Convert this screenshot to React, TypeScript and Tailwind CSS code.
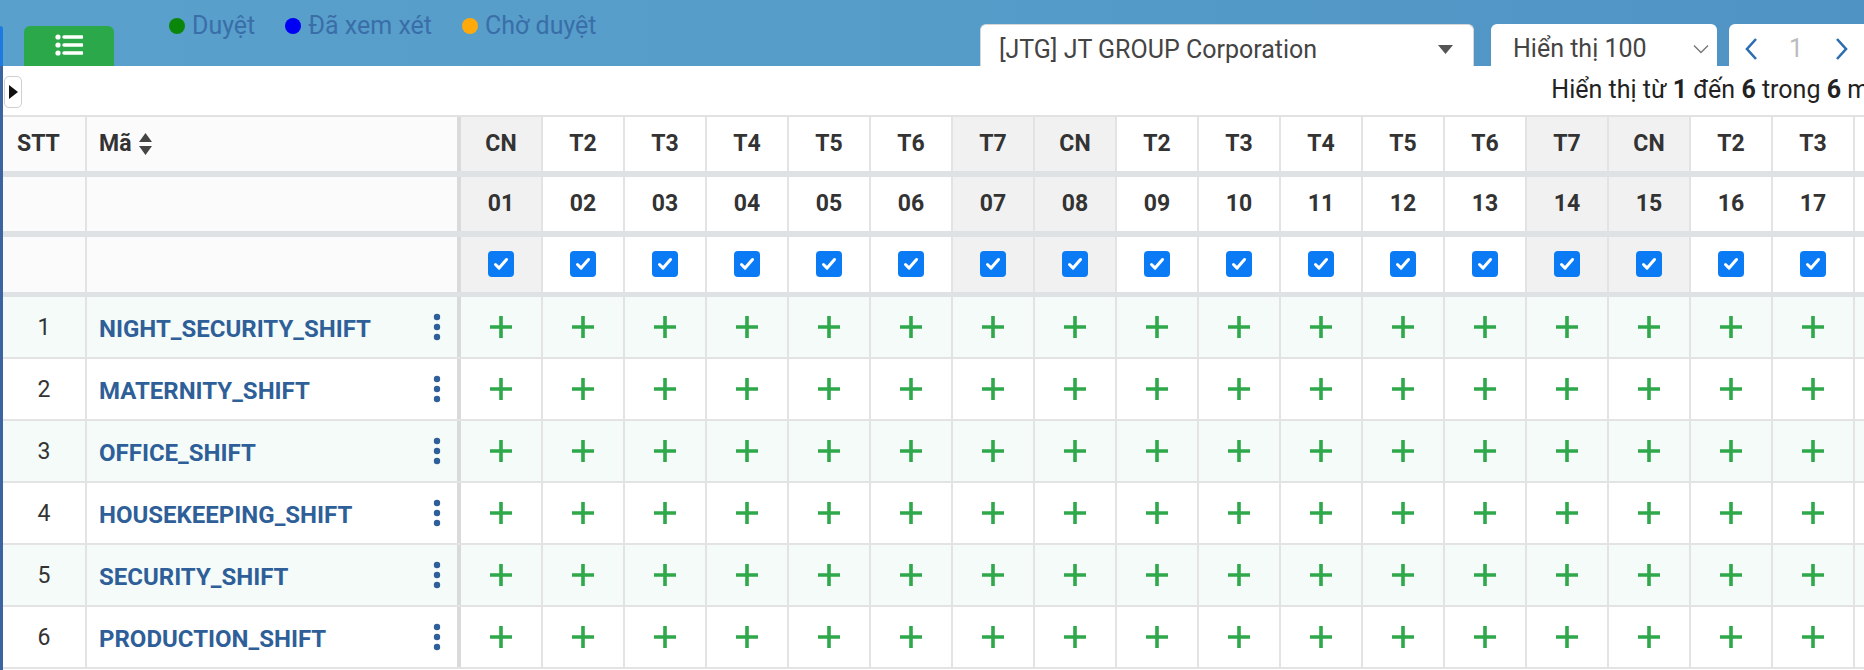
import React from 'react';

const DAY_NAMES = ['CN', 'T2', 'T3', 'T4', 'T5', 'T6', 'T7'];

const days = Array.from({ length: 19 }, (_, i) => ({
  label: DAY_NAMES[i % 7],
  num: String(i + 1).padStart(2, '0'),
  weekend: i % 7 === 0 || i % 7 === 6,
}));

const shifts = [
  'NIGHT_SECURITY_SHIFT',
  'MATERNITY_SHIFT',
  'OFFICE_SHIFT',
  'HOUSEKEEPING_SHIFT',
  'SECURITY_SHIFT',
  'PRODUCTION_SHIFT',
];

const Plus = () => (
  <svg width="24" height="24" viewBox="0 0 24 24">
    <path d="M12 1v22M1 12h22" stroke="#2ea84a" strokeWidth="3.6" fill="none" />
  </svg>
);

const CheckBox = () => (
  <div className="w-[26px] h-[26px] rounded-[4px] bg-[#0b7af5] flex items-center justify-center">
    <svg width="18" height="18" viewBox="0 0 18 18">
      <path d="M3.5 9.5l3.6 3.6L14.5 4.5" stroke="#fff" strokeWidth="3" fill="none" strokeLinecap="round" strokeLinejoin="round" />
    </svg>
  </div>
);

const Kebab = () => (
  <svg width="8" height="28" viewBox="0 0 8 28">
    <circle cx="4" cy="4" r="3.2" fill="#2f5f98" />
    <circle cx="4" cy="14" r="3.2" fill="#2f5f98" />
    <circle cx="4" cy="24" r="3.2" fill="#2f5f98" />
  </svg>
);

export default function App() {
  return (
    <div className="w-[1864px] h-[670px] overflow-hidden flex flex-col bg-gradient-to-r from-[#5aa0cc] via-[#559cc9] to-[#4f93c4] font-[Roboto,sans-serif] text-[#333]">
      {/* top bar */}
      <div className="h-[66px] flex shrink-0">
        <div className="w-[980px] shrink-0 flex items-start">
          <div className="w-[3px] h-[40px] mt-[26px] bg-[#1f7ae0] rounded-tr-[3px]" />
          <div className="ml-[21px] mt-[26px] w-[90px] h-[40px] rounded-t-[6px] bg-[#2aa84a] flex justify-center pt-[8px]">
            <svg width="28" height="22" viewBox="0 0 28 22">
              <circle cx="3" cy="3" r="2.6" fill="#fff" />
              <circle cx="3" cy="11" r="2.6" fill="#fff" />
              <circle cx="3" cy="19" r="2.6" fill="#fff" />
              <path d="M9 3h18M9 11h18M9 19h18" stroke="#fff" strokeWidth="3.4" strokeLinecap="round" />
            </svg>
          </div>
          <div className="ml-[55px] mt-[11px] flex items-center gap-[30px] text-[25px] leading-[30px] text-[#3a6ea8]">
            <div className="flex items-center gap-[7px]">
              <span className="w-[16px] h-[16px] rounded-full bg-[#0a870a]" />
              <span>Duyệt</span>
            </div>
            <div className="flex items-center gap-[7px]">
              <span className="w-[16px] h-[16px] rounded-full bg-[#0000f5]" />
              <span>Đã xem xét</span>
            </div>
            <div className="flex items-center gap-[7px]">
              <span className="w-[16px] h-[16px] rounded-full bg-[#ffa90a]" />
              <span>Chờ duyệt</span>
            </div>
          </div>
        </div>

        <div className="mt-[24px] w-[494px] h-[42px] shrink-0 bg-white rounded-t-[6px] border-t border-x border-[#d6d6d6] flex items-center pl-[18px] pr-[20px] pt-[8px]">
          <span className="flex-1 text-[25px] text-[#444] whitespace-nowrap">[JTG] JT GROUP Corporation</span>
          <svg width="15" height="9" viewBox="0 0 15 9">
            <path d="M0 0h15L7.5 9z" fill="#555" />
          </svg>
        </div>

        <div className="ml-[17px] mt-[24px] w-[226px] h-[42px] shrink-0 bg-white rounded-t-[6px] flex items-center pl-[22px] pr-[8px] pt-[8px]">
          <span className="flex-1 text-[25px] text-[#444] whitespace-nowrap">Hiển thị 100</span>
          <svg width="16" height="10" viewBox="0 0 16 10">
            <path d="M1 1.5l7 7 7-7" stroke="#777" strokeWidth="1.4" fill="none" />
          </svg>
        </div>

        <div className="ml-[12px] mt-[24px] w-[160px] h-[42px] shrink-0 bg-white rounded-t-[6px] flex items-center pl-[15px] pt-[8px]">
          <svg width="14" height="24" viewBox="0 0 14 24">
            <path d="M12 2L3 12l9 10" stroke="#2d6db0" strokeWidth="2.6" fill="none" />
          </svg>
          <span className="ml-[31px] text-[25px] text-[#bbb]">1</span>
          <svg className="ml-[32px]" width="14" height="24" viewBox="0 0 14 24">
            <path d="M2 2l9 10-9 10" stroke="#2d6db0" strokeWidth="2.6" fill="none" />
          </svg>
        </div>
      </div>

      {/* white panel */}
      <div className="flex-1 flex bg-white">
        <div className="w-[3px] shrink-0 bg-[#3c64a0]" />
        <div className="flex-1 flex flex-col min-w-0">
          <div className="h-[49px] flex items-start shrink-0">
            <button className="ml-[1px] mt-[10px] w-[18px] h-[32px] rounded-[5px] border border-[#cfcfcf] bg-white flex items-center justify-center">
              <svg width="9" height="14" viewBox="0 0 9 14">
                <path d="M0 0l9 7-9 7z" fill="#111" />
              </svg>
            </button>
            <div className="flex-1 flex justify-end mt-[9px] -mr-[32px] text-[25px] leading-[30px] text-[#222] whitespace-nowrap">
              <span>
                Hiển thị từ <b>1</b> đến <b>6</b> trong <b>6</b> mục
              </span>
            </div>
          </div>

          {/* table */}
          <div className="border-t-2 border-[#e2e2e2] flex flex-col">
            {/* header row: day names */}
            <div className="flex h-[60px] border-b-[6px] border-[#dfe2e4]">
              <div className="w-[84px] shrink-0 bg-[#fbfbfb] border-r-2 border-[#e3e3e3] flex items-center pl-[14px] text-[23px] font-bold">
                STT
              </div>
              <div className="w-[374px] shrink-0 bg-[#fbfbfb] border-r-4 border-[#dadada] flex items-center pl-[12px] gap-[7px] text-[23px] font-bold">
                Mã
                <svg width="15" height="24" viewBox="0 0 15 24">
                  <path d="M7.5 1l6.5 9H1zM7.5 23l6.5-9H1z" fill="#444" />
                </svg>
              </div>
              {days.map((d) => (
                <div
                  key={'n' + d.num}
                  className={`w-[82px] shrink-0 border-r-2 border-[#e3e3e3] flex items-center justify-center text-[23px] font-bold ${d.weekend ? 'bg-[#f1f1f1]' : 'bg-white'}`}
                >
                  {d.label}
                </div>
              ))}
            </div>

            {/* header row: dates */}
            <div className="flex h-[60px] border-b-[6px] border-[#dfe2e4]">
              <div className="w-[84px] shrink-0 bg-[#fbfbfb] border-r-2 border-[#e3e3e3]" />
              <div className="w-[374px] shrink-0 bg-[#fbfbfb] border-r-4 border-[#dadada]" />
              {days.map((d) => (
                <div
                  key={'d' + d.num}
                  className={`w-[82px] shrink-0 border-r-2 border-[#e3e3e3] flex items-center justify-center text-[23px] font-bold ${d.weekend ? 'bg-[#f1f1f1]' : 'bg-white'}`}
                >
                  {d.num}
                </div>
              ))}
            </div>

            {/* header row: checkboxes */}
            <div className="flex h-[60px] border-b-[5px] border-[#dfe2e4]">
              <div className="w-[84px] shrink-0 bg-[#fbfbfb] border-r-2 border-[#e3e3e3]" />
              <div className="w-[374px] shrink-0 bg-[#fbfbfb] border-r-4 border-[#dadada]" />
              {days.map((d) => (
                <div
                  key={'c' + d.num}
                  className={`w-[82px] shrink-0 border-r-2 border-[#e3e3e3] flex items-center justify-center pb-[2px] ${d.weekend ? 'bg-[#f1f1f1]' : 'bg-white'}`}
                >
                  <CheckBox />
                </div>
              ))}
            </div>

            {/* data rows */}
            {shifts.map((code, idx) => (
              <div
                key={code}
                className={`flex h-[62px] border-b-2 border-[#e3e3e3] ${idx % 2 === 0 ? 'bg-[#f4fbf8]' : 'bg-white'}`}
              >
                <div className="w-[84px] shrink-0 border-r-2 border-[#e3e3e3] flex items-center justify-center text-[23px] pt-[2px]">
                  {idx + 1}
                </div>
                <div className="w-[374px] shrink-0 border-r-4 border-[#dadada] flex items-center justify-between pl-[12px] pr-[16px]">
                  <span className="text-[24px] font-bold text-[#2f5f98] pt-[3px]">{code}</span>
                  <Kebab />
                </div>
                {days.map((d) => (
                  <div
                    key={code + d.num}
                    className="w-[82px] shrink-0 border-r-2 border-[#e3e3e3] flex items-center justify-center"
                  >
                    <Plus />
                  </div>
                ))}
              </div>
            ))}
          </div>
        </div>
      </div>
    </div>
  );
}
